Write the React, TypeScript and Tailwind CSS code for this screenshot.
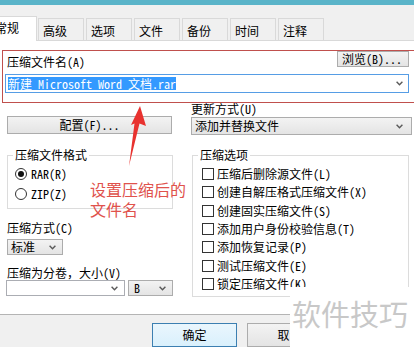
import React from 'react'

const font = "font-['Noto_Sans_Mono_CJK_SC','Noto_Sans_CJK_SC','Liberation_Mono',monospace]"

const Chevron = () => (
  <svg width="7" height="5" viewBox="0 0 7 5" className="shrink-0">
    <path d="M0.6 0.8 L3.5 3.8 L6.4 0.8" fill="none" stroke="#5a5a5a" strokeWidth="1.4" />
  </svg>
)

const tabs = ['高级', '选项', '文件', '备份', '时间', '注释']

const options = [
  '压缩后删除源文件(L)',
  '创建自解压格式压缩文件(X)',
  '创建固实压缩文件(S)',
  '添加用户身份校验信息(T)',
  '添加恢复记录(P)',
  '测试压缩文件(E)',
  '锁定压缩文件(K)',
]

const btn = 'border border-[#acacac] bg-linear-to-b from-[#f3f3f3] to-[#e4e4e4]'

export default function App() {
  return (
    <div className={`relative h-[347px] w-[414px] overflow-hidden bg-white text-[12px] text-black ${font}`}>
      <div className="h-[5px] bg-[#5ab4c9]" />

      {/* tab strip */}
      <div className="flex h-[35px] items-end bg-[#f0f0f0]">
        <div className="relative z-10 -mb-px ml-[-8px] h-[25px] w-[45px] border border-b-0 border-[#d9d9d9] bg-white pl-[2px] pt-[4px] leading-[14px]">常规</div>
        <div className="ml-[1px] flex gap-[2px]">
          {tabs.map(t => (
            <div key={t} className="h-[22px] w-[46px] border border-b-0 border-[#d9d9d9] bg-[#f0f0f0] pl-[4px] pt-[5px] leading-[14px]">{t}</div>
          ))}
        </div>
      </div>

      {/* page */}
      <div className="h-[274px] border-t border-[#d9d9d9] bg-white">
        <div className="mt-[10px] flex items-start justify-between pl-[7px] pr-[5px]">
          <span className="mt-[4px] leading-[14px]">压缩文件名(A)</span>
          <button className={`h-[16px] w-[72px] pl-[4px] text-left leading-[14px] ${btn}`}>浏览(B)...</button>
        </div>
        <div className="ml-[5px] mt-[5px] flex h-[19px] w-[404px] items-center justify-between border border-[#569de5] pl-[2px] pr-[5px]">
          <span className="bg-[#3399ff] leading-[13px] text-white">新建 Microsoft Word 文档.rar</span>
          <Chevron />
        </div>

        <div className="mt-[9px] flex">
          {/* left column */}
          <div className="ml-[7px] w-[166px]">
            <button className={`mt-[14px] h-[18px] w-[165px] leading-[14px] ${btn}`}>配置(F)...</button>
            <div className="relative mt-[21px] h-[54px] w-[166px] border border-[#dcdcdc] pt-[8px]">
              <span className="absolute left-[5px] top-[-8px] bg-white px-[2px] leading-[14px]">压缩文件格式</span>
              <div className="ml-[7px] flex h-[20px] items-center gap-[4px]">
                <span className="flex h-[12px] w-[12px] items-center justify-center rounded-full border border-[#333]">
                  <span className="h-[6px] w-[6px] rounded-full bg-[#111]" />
                </span>
                <span className="leading-[14px]">RAR(R)</span>
              </div>
              <div className="ml-[7px] flex h-[20px] items-center gap-[4px]">
                <span className="h-[12px] w-[12px] rounded-full border border-[#333]" />
                <span className="leading-[14px]">ZIP(Z)</span>
              </div>
            </div>
            <div className="mt-[12px] leading-[14px]">压缩方式(C)</div>
            <div className={`mt-[4px] flex h-[16px] w-[56px] items-center justify-between pl-[3px] pr-[6px] ${btn}`}>
              <span className="leading-[14px]">标准</span>
              <Chevron />
            </div>
            <div className="mt-[11px] leading-[14px]">压缩为分卷，大小(V)</div>
            <div className="-ml-px flex gap-[3px]">
              <div className="flex h-[16px] w-[119px] items-center justify-end border border-[#abadb3] bg-white pr-[6px]">
                <Chevron />
              </div>
              <div className={`flex h-[16px] w-[45px] items-center justify-between pl-[5px] pr-[6px] ${btn}`}>
                <span className="leading-[14px]">B</span>
                <Chevron />
              </div>
            </div>
          </div>

          {/* right column */}
          <div className="ml-[18px] w-[221px]">
            <div className="leading-[14px]">更新方式(U)</div>
            <div className={`mt-[1px] flex h-[18px] w-[221px] items-center justify-between pl-[3px] pr-[8px] ${btn}`}>
              <span className="leading-[14px]">添加并替换文件</span>
              <Chevron />
            </div>
            <div className="relative ml-[1px] mt-[20px] h-[142px] w-[217px] border border-[#dcdcdc] pt-[9px]">
              <span className="absolute left-[5px] top-[-8px] bg-white px-[2px] leading-[14px]">压缩选项</span>
              {options.map(o => (
                <div key={o} className="ml-[9px] flex h-[18.3px] items-center gap-[3px]">
                  <span className="h-[12px] w-[12px] shrink-0 border border-[#333] bg-white" />
                  <span className="leading-[14px]">{o}</span>
                </div>
              ))}
            </div>
          </div>
        </div>
      </div>

      {/* dialog buttons */}
      <div className="flex h-[33px] gap-[10px] border-t border-[#b4b4b4] bg-[#f0f0f0] pl-[152px] pt-[8px]">
        <button className="h-[24px] w-[85px] border border-[#3c7fb1] bg-linear-to-b from-[#eaf6fd] to-[#d9f0fc] leading-[14px]">确定</button>
        <button className={`h-[24px] w-[85px] leading-[14px] ${btn}`}>取消</button>
      </div>

      {/* annotation overlays */}
      <div className="absolute left-[2px] top-[50px] h-[53px] w-[420px] border border-[#c0504d]" />
      <svg className="absolute left-0 top-0" width="414" height="347">
        <polygon points="140,106 146,126 139.5,123.5 129,166 134.5,123.5 131,125" fill="#e8322f" />
      </svg>
      <div className="absolute left-[90px] top-[179px] font-['Noto_Sans_CJK_SC',sans-serif] text-[16px] leading-[20px] text-[#e0524c]">
        设置压缩后的<br />文件名
      </div>
      <div className="absolute left-[290px] top-[287px] h-[60px] w-[124px] bg-white pl-[2px] pt-[12px] font-['Noto_Sans_CJK_SC',sans-serif] text-[29px] leading-[29px] text-[#c8c8c8]">
        软件技巧
      </div>
    </div>
  )
}
